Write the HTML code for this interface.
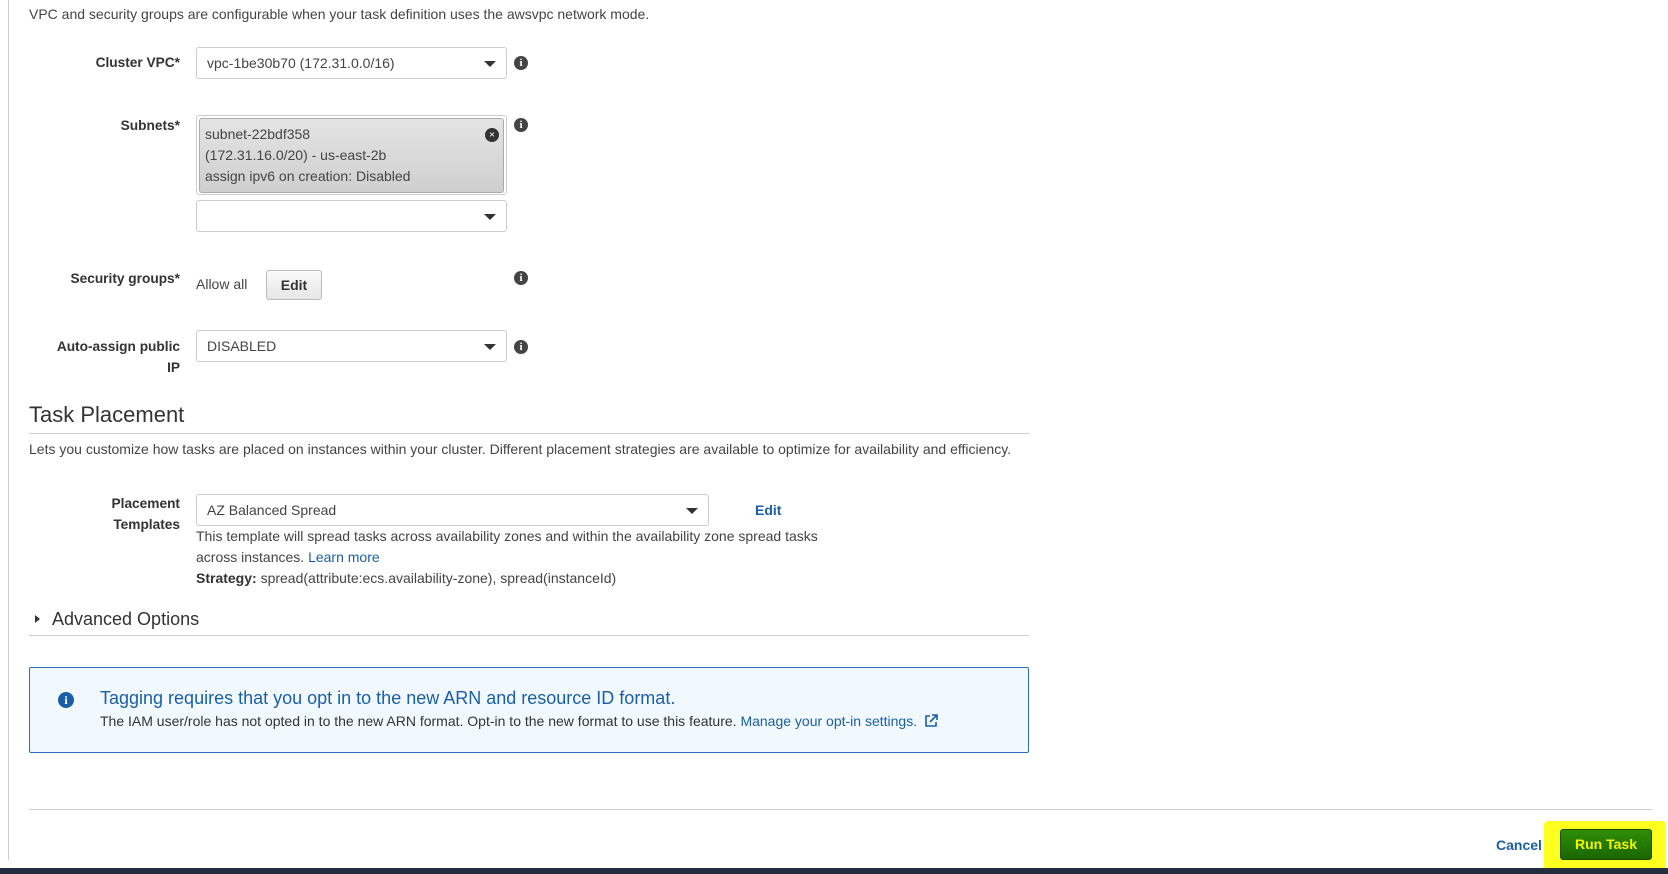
<!DOCTYPE html>
<html><head><meta charset="utf-8"><style>
*{box-sizing:border-box;margin:0;padding:0}
body{width:1668px;height:874px;background:#fff;position:relative;overflow:hidden;font-family:"Liberation Sans",Arial,sans-serif;font-size:14px;color:#444}
.a{position:absolute;white-space:nowrap}
.lbl{position:absolute;right:1488px;text-align:right;font-weight:bold;color:#333;font-size:13.7px;line-height:21px}
.sel{position:absolute;left:196px;width:311px;height:32px;border:1px solid #ccc;border-radius:3px;background:#fff;padding:0 10px;line-height:30px;color:#444;font-size:14px}
.sel:after{content:"";position:absolute;right:10px;top:13px;border-left:6px solid transparent;border-right:6px solid transparent;border-top:6px solid #333}
.info{position:absolute;width:14px;height:14px;border-radius:50%;background:#444;color:#fff;font:bold 11px/14px "Liberation Serif",serif;text-align:center}
.hr{position:absolute;height:1px;background:#ccc}
a{color:#1a5fa6;text-decoration:none}
</style></head><body>
<div class="a" style="left:8px;top:0;width:1px;height:860px;background:#ccc"></div>
<div class="a" style="left:29px;top:6px">VPC and security groups are configurable when your task definition uses the awsvpc network mode.</div>

<div class="lbl" style="top:52px">Cluster VPC*</div>
<div class="sel" style="top:47px">vpc-1be30b70 (172.31.0.0/16)</div>
<div class="info" style="left:514px;top:56px">i</div>

<div class="lbl" style="top:115px">Subnets*</div>
<div class="a" style="left:196px;top:115px;width:311px;height:80px;border:1px solid #ccc;border-radius:3px"></div>
<div class="a" style="left:199px;top:118px;width:305px;height:75px;border:1px solid #aaa;border-radius:3px;background:linear-gradient(#e4e4e4,#cfcfcf);padding:5px 5px;line-height:21px;color:#444">subnet-22bdf358<br>(172.31.16.0/20) - us-east-2b<br>assign ipv6 on creation: Disabled</div>
<div class="info" style="left:485px;top:128px;background:#333">×</div>
<div class="info" style="left:514px;top:118px">i</div>
<div class="sel" style="top:200px"></div>

<div class="lbl" style="top:268px">Security groups*</div>
<div class="a" style="left:196px;top:276px">Allow all</div>
<div class="a" style="left:266px;top:270px;width:56px;height:30px;border:1px solid #bbb;border-radius:3px;background:linear-gradient(#fafafa,#e6e6e6);text-align:center;line-height:28px;font-weight:bold;color:#333">Edit</div>
<div class="info" style="left:514px;top:271px">i</div>

<div class="lbl" style="top:336px">Auto-assign public<br>IP</div>
<div class="sel" style="top:330px">DISABLED</div>
<div class="info" style="left:514px;top:340px">i</div>

<div class="a" style="left:29px;top:402px;font-size:22px;color:#333">Task Placement</div>
<div class="hr" style="left:29px;top:433px;width:1000px"></div>
<div class="a" style="left:29px;top:441px;font-size:14px">Lets you customize how tasks are placed on instances within your cluster. Different placement strategies are available to optimize for availability and efficiency.</div>

<div class="lbl" style="top:493px">Placement<br>Templates</div>
<div class="sel" style="top:494px;width:513px">AZ Balanced Spread</div>
<div class="a" style="left:755px;top:502px;font-weight:bold;color:#1a5fa6">Edit</div>
<div class="a" style="left:196px;top:526px;line-height:21px">This template will spread tasks across availability zones and within the availability zone spread tasks<br>across instances. <a>Learn more</a><br><b style="color:#333">Strategy:</b> spread(attribute:ecs.availability-zone), spread(instanceId)</div>

<div class="a" style="left:35px;top:615px;border-top:4px solid transparent;border-bottom:4px solid transparent;border-left:5px solid #333"></div>
<div class="a" style="left:52px;top:609px;font-size:18px;color:#333">Advanced Options</div>
<div class="hr" style="left:29px;top:635px;width:1000px"></div>

<div class="a" style="left:29px;top:667px;width:1000px;height:86px;border:1px solid #2a6fb5;border-radius:2px;background:#f1f9ff"></div>
<div class="info" style="left:58px;top:692px;width:16px;height:16px;line-height:16px;background:#1a5fa6;font-size:12px">i</div>
<div class="a" style="left:100px;top:688px;font-size:18px;color:#1a5fa6">Tagging requires that you opt in to the new ARN and resource ID format.</div>
<div class="a" style="left:100px;top:713px;font-size:14px;color:#333">The IAM user/role has not opted in to the new ARN format. Opt-in to the new format to use this feature. <a>Manage your opt-in settings.</a></div>
<svg class="a" style="left:924px;top:714px" width="14" height="14" viewBox="0 0 14 14" fill="none" stroke="#1a5fa6" stroke-width="1.6"><path d="M6 2H2v10h10V8"/><path d="M8 1h5v5M13 1L6 8"/></svg>

<div class="hr" style="left:29px;top:809px;width:1623px"></div>
<div class="a" style="left:1544px;top:821px;width:122px;height:53px;background:#ffff20;border-radius:4px"></div>
<div class="a" style="left:1496px;top:837px;font-weight:bold;color:#1a5fa6">Cancel</div>
<div class="a" style="left:1560px;top:829px;width:92px;height:31px;border:1px solid #1a4d00;border-radius:3px;background:linear-gradient(#2f8f06,#1b6500);text-align:center;line-height:29px;font-weight:bold;color:#f5f500">Run Task</div>
<div class="a" style="left:0;top:868px;width:1668px;height:6px;background:#232f3e"></div>
</body></html>
